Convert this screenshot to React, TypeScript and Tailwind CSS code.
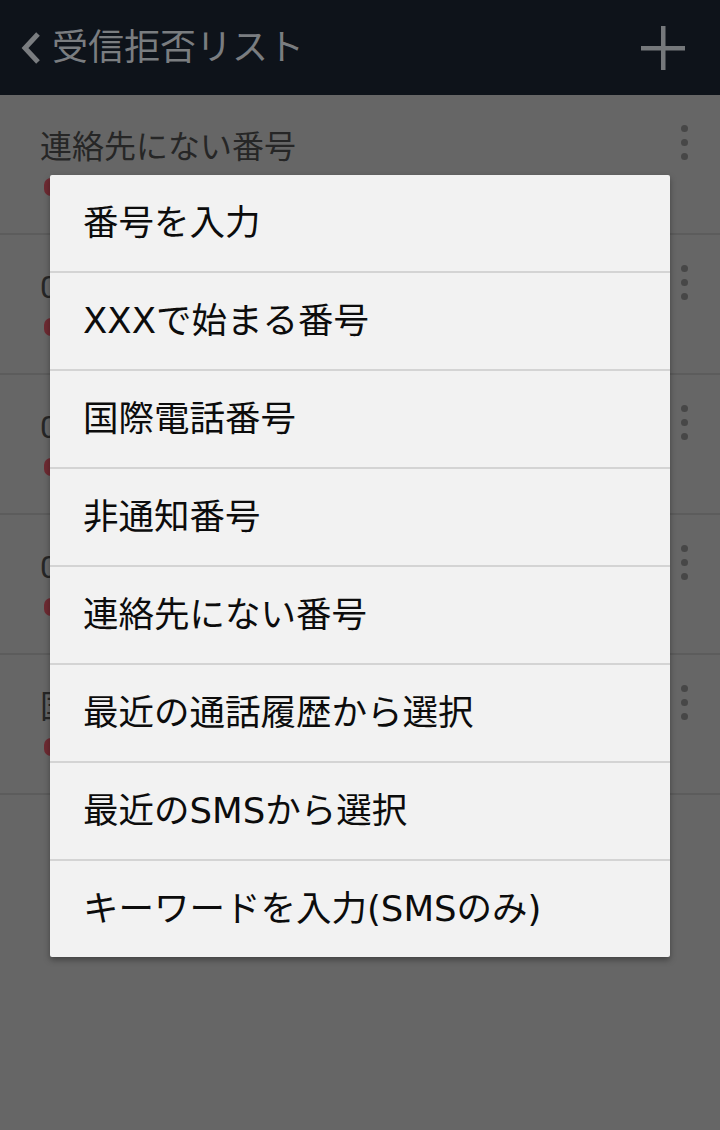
import React from "react";

const FONT = { fontFamily: '"Roboto", "Noto Sans CJK JP", sans-serif' };
const MENU_FONT = { fontFamily: '"DejaVu Sans", "Noto Sans CJK JP", sans-serif' };

const rows = [
  "連絡先にない番号",
  "0120-000-000",
  "0120-000-001",
  "0120-000-002",
  "国際電話番号",
];

const menu = [
  "番号を入力",
  "XXXで始まる番号",
  "国際電話番号",
  "非通知番号",
  "連絡先にない番号",
  "最近の通話履歴から選択",
  "最近のSMSから選択",
  "キーワードを入力(SMSのみ)",
];

export default function App() {
  return (
    <div className="relative w-[720px] h-[1130px] overflow-hidden bg-[#666666]" style={FONT}>
      <header className="h-[95px] bg-[#0e131a] flex items-center justify-between pl-[18px] pr-[34px]">
        <div className="flex items-center gap-[8px]">
          <svg width="26" height="36" viewBox="0 0 26 36">
            <path d="M20 4 L7 18 L20 32" fill="none" stroke="#7a7d80" strokeWidth="5" />
          </svg>
          <span className="text-[36px] leading-none text-[#7a7d80]">受信拒否リスト</span>
        </div>
        <svg width="46" height="46" viewBox="0 0 46 46">
          <rect x="21" y="1" width="4.5" height="44" fill="#75787b" />
          <rect x="1" y="21" width="44" height="4.5" fill="#75787b" />
        </svg>
      </header>
      <div>
        {rows.map((r, i) => (
          <div key={i} className="h-[140px] border-b-2 border-[#5c5c5c] flex justify-between pl-[40px] pr-[32px]">
            <div>
              <div className="mt-[32px] h-[40px] text-[32px] leading-[40px] text-[#262626]">{r}</div>
              <div className="mt-[11px] ml-[4px] w-[14px] h-[18px] rounded-full bg-[#6e2a32]" />
            </div>
            <div className="mt-[30px] flex flex-col gap-[7px] items-center">
              <span className="w-[7px] h-[7px] rounded-full bg-[#474747]" />
              <span className="w-[7px] h-[7px] rounded-full bg-[#474747]" />
              <span className="w-[7px] h-[7px] rounded-full bg-[#474747]" />
            </div>
          </div>
        ))}
      </div>
      <div
        className="absolute left-[50px] top-[175px] w-[620px] bg-[#f2f2f2] rounded-[2px] shadow-[0_3px_6px_rgba(0,0,0,0.35)]"
        style={MENU_FONT}
      >
        {menu.map((m, i) => (
          <div
            key={i}
            className={`h-[96px] box-content flex items-center pl-[33px] text-[35.5px] font-normal text-[#0c0c0c] ${i > 0 ? "border-t-2 border-[#d4d4d4]" : ""}`}
          >
            {m}
          </div>
        ))}
      </div>
    </div>
  );
}
